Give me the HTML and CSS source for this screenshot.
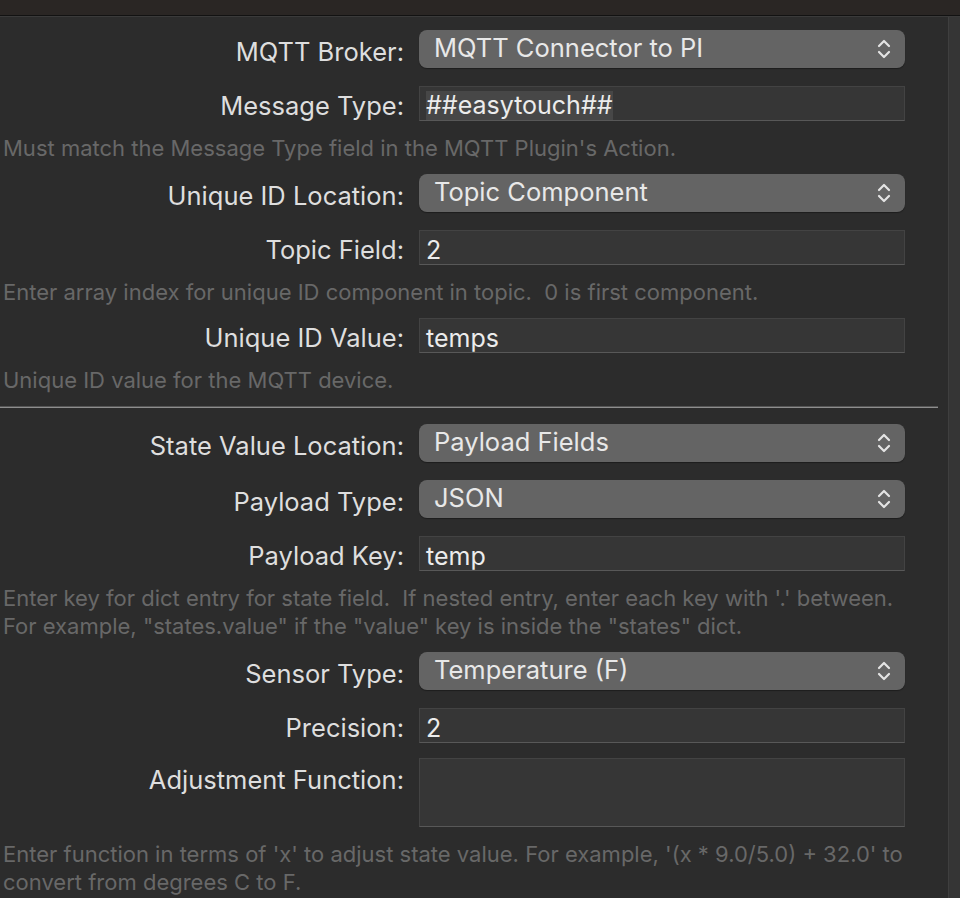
FILE: index.html
```html
<!DOCTYPE html>
<html lang="en">
<head>
  <meta charset="UTF-8">
  <meta name="viewport" content="width=device-width, initial-scale=1.0">
  <title>MQTT Sensor Config</title>
  <link rel="stylesheet" href="styles.css">
</head>
<body>
  <div class="titlebar"></div>
  <div class="window">
    <div class="form">
      <div class="row first">
        <label>MQTT Broker:</label>
        <div class="popup"><span>MQTT Connector to PI</span><svg class="arrows" viewBox="0 0 14 20"><path d="M2 7 L7 2 L12 7 M2 13 L7 18 L12 13"/></svg></div>
      </div>
      <div class="row">
        <label>Message Type:</label>
        <div class="field"><span class="selected">##easytouch##</span></div>
      </div>
      <p class="note">Must match the Message Type field in the MQTT Plugin's Action.</p>

      <div class="row">
        <label>Unique ID Location:</label>
        <div class="popup"><span>Topic Component</span><svg class="arrows" viewBox="0 0 14 20"><path d="M2 7 L7 2 L12 7 M2 13 L7 18 L12 13"/></svg></div>
      </div>
      <div class="row">
        <label>Topic Field:</label>
        <div class="field">2</div>
      </div>
      <p class="note">Enter array index for unique ID component in topic.&nbsp; 0 is first component.</p>

      <div class="row">
        <label>Unique ID Value:</label>
        <div class="field">temps</div>
      </div>
      <p class="note">Unique ID value for the MQTT device.</p>

      <div class="separator"></div>

      <div class="row after-sep">
        <label>State Value Location:</label>
        <div class="popup"><span>Payload Fields</span><svg class="arrows" viewBox="0 0 14 20"><path d="M2 7 L7 2 L12 7 M2 13 L7 18 L12 13"/></svg></div>
      </div>
      <div class="row">
        <label>Payload Type:</label>
        <div class="popup"><span>JSON</span><svg class="arrows" viewBox="0 0 14 20"><path d="M2 7 L7 2 L12 7 M2 13 L7 18 L12 13"/></svg></div>
      </div>
      <div class="row">
        <label>Payload Key:</label>
        <div class="field">temp</div>
      </div>
      <p class="note">Enter key for dict entry for state field.&nbsp; If nested entry, enter each key with '.' between.<br>For example, "states.value" if the "value" key is inside the "states" dict.</p>

      <div class="row">
        <label>Sensor Type:</label>
        <div class="popup"><span>Temperature (F)</span><svg class="arrows" viewBox="0 0 14 20"><path d="M2 7 L7 2 L12 7 M2 13 L7 18 L12 13"/></svg></div>
      </div>
      <div class="row">
        <label>Precision:</label>
        <div class="field">2</div>
      </div>
      <div class="row top">
        <label>Adjustment Function:</label>
        <div class="field area"></div>
      </div>
      <p class="note">Enter function in terms of 'x' to adjust state value. For example, '(x * 9.0/5.0) + 32.0' to<br>convert from degrees C to F.</p>
    </div>
    <div class="scrollbar"></div>
  </div>
</body>
</html>
```

FILE: styles.css
```css
html, body {
  margin: 0;
  height: 100%;
  overflow: hidden;
}
body {
  background-color: #2c2c2c;
  font-family: Inter, "Liberation Sans", Arial, sans-serif;
  color: #dedede;
}
.titlebar {
  height: 15px;
  background-color: #2a2624;
  border-bottom: 1px solid #121212;
  box-shadow: 0 1px 0 #3a3a3a;
}
.window {
  display: flex;
  height: calc(100% - 16px);
  margin-top: 1px;
}
.form {
  width: 948px;
  padding-top: 13px;
  display: flex;
  flex-direction: column;
}
.scrollbar {
  width: 11px;
  background-color: #353535;
  border-left: 1px solid #3f3f3f;
}
.row {
  display: grid;
  grid-template-columns: 404px 486px;
  column-gap: 15px;
  align-items: center;
  margin-top: 18px;
}
.row.first {
  margin-top: 0;
}
.note + .row,
.note + .separator {
  margin-top: 12px;
}
.row.after-sep {
  margin-top: 16px;
}
.row.top {
  align-items: start;
  margin-top: 15px;
}
.row.top label {
  padding-top: 7px;
}
label {
  text-align: right;
  font-size: 25.5px;
  line-height: 30px;
  padding-top: 5px;
  white-space: nowrap;
}
.popup {
  height: 38px;
  box-sizing: border-box;
  border-radius: 8px;
  background-color: #646464;
  box-shadow: 0 1px 1px rgba(0, 0, 0, 0.35);
  color: #e8e8e8;
  font-size: 25.5px;
  display: flex;
  align-items: center;
  justify-content: space-between;
  padding: 0 14px 3px 15px;
}
.arrows {
  width: 14px;
  height: 20px;
  margin-top: 3px;
  fill: none;
  stroke: #e4e4e4;
  stroke-width: 2.2;
  stroke-linecap: round;
  stroke-linejoin: round;
}
.field {
  height: 35px;
  box-sizing: border-box;
  background-color: #363636;
  border: 1px solid #434343;
  border-bottom-color: #585858;
  color: #ececec;
  font-size: 25px;
  display: flex;
  align-items: center;
  padding: 4px 6px 0 6px;
}
.field .selected {
  background-color: #474747;
  line-height: 29px;
  margin-top: -1px;
}
.field.area {
  height: 69px;
}
.note {
  margin: 13px 0 0 3px;
  font-size: 22px;
  line-height: 28px;
  color: #686868;
  white-space: nowrap;
}
.separator {
  width: 938px;
  height: 1px;
  background-color: #555555;
  border-bottom: 1px solid #8e8e8e;
}
```
